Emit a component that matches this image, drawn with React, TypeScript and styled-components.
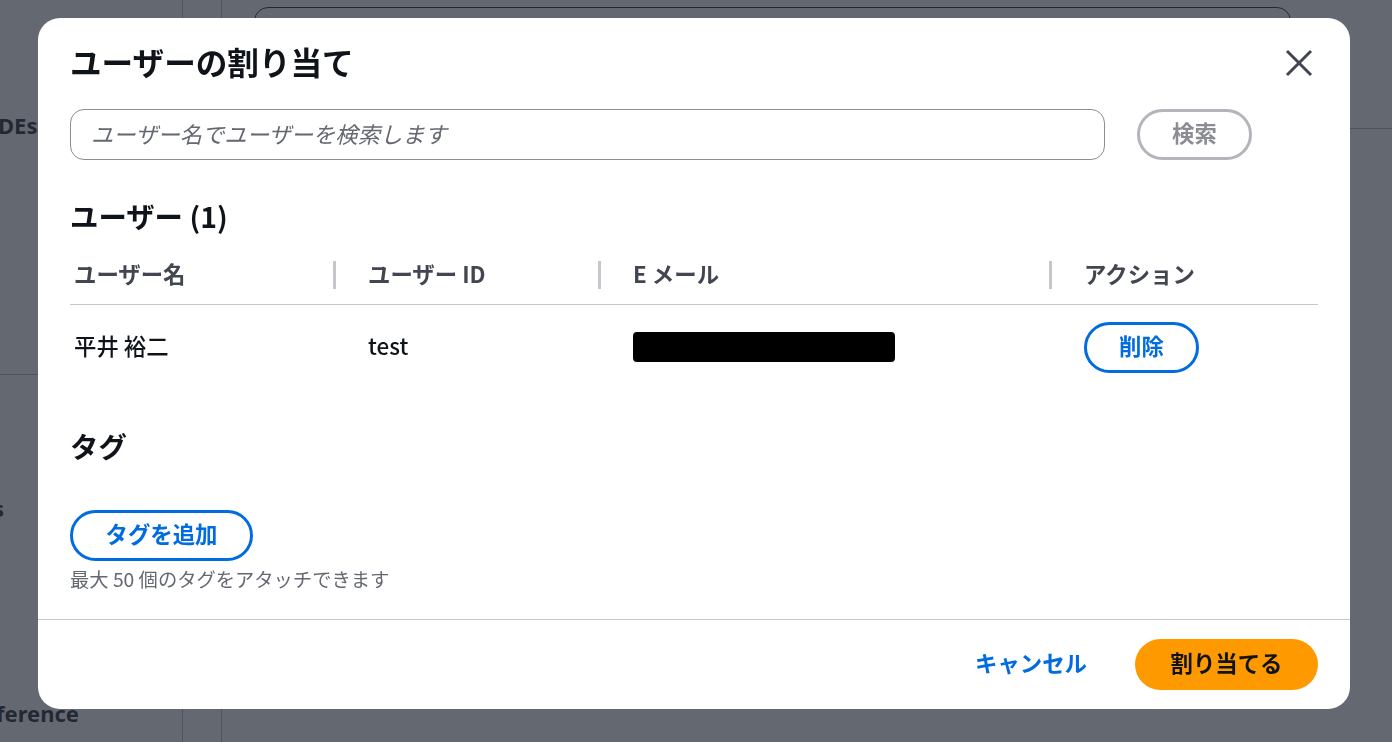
import { createGlobalStyle, styled } from 'styled-components';

const fontStack = `'Noto Sans CJK JP', 'Noto Sans', sans-serif`;

const GlobalStyle = createGlobalStyle`
  html, body {
    margin: 0;
    padding: 0;
    height: 100%;
    overflow: hidden;
    background: #fff;
    font-family: ${fontStack};
  }
`;

const Page = styled.div`
  display: flex;
  height: 742px;
  overflow: hidden;
  color: #16191f;
`;

const Sidebar = styled.aside`
  width: 182px;
  flex-shrink: 0;
  display: flex;
  flex-direction: column;
  border-right: 1px solid #aab7b8;
  overflow: hidden;
  font-family: 'Noto Sans', sans-serif;
  font-size: 22px;
  font-weight: 700;
  line-height: 30px;
`;

const SidebarItem = styled.div<{ $top: number; $left: number }>`
  margin-top: ${({ $top }) => $top}px;
  margin-left: ${({ $left }) => $left}px;
  white-space: nowrap;
`;

const SidebarRule = styled.hr`
  margin: 234px 0 0;
  border: none;
  border-top: 1px solid #aab7b8;
`;

const Gutter = styled.div`
  width: 38px;
  flex-shrink: 0;
  border-right: 1px solid #aab7b8;
`;

const Main = styled.main`
  flex: 1;
`;

const MainHeader = styled.div`
  height: 121px;
  padding: 7px 101px 0 32px;
  border-bottom: 1px solid #aab7b8;
`;

const SearchBox = styled.div`
  height: 60px;
  border: 1px solid #16191f;
  border-radius: 14px;
`;

const Overlay = styled.div`
  position: fixed;
  inset: 0;
  background: rgba(40, 46, 58, 0.72);
`;

const Modal = styled.section`
  position: absolute;
  left: 38px;
  top: 18px;
  width: 1312px;
  height: 691px;
  box-sizing: border-box;
  display: flex;
  flex-direction: column;
  background: #fff;
  border-radius: 22px;
  overflow: hidden;
`;

const ModalBody = styled.div`
  flex: 1;
  padding: 0 32px;
`;

const ModalHeader = styled.header`
  display: flex;
  align-items: center;
  justify-content: space-between;
  height: 91px;
  box-sizing: border-box;
  padding-bottom: 2px;
`;

const Title = styled.h2`
  margin: 0 0 3px;
  font-size: 31.6px;
  line-height: 44px;
  font-weight: 700;
  color: #0f141a;
`;

const CloseButton = styled.button`
  display: flex;
  margin-right: 5px;
  padding: 0;
  border: none;
  background: none;
  color: #424650;
`;

const SearchRow = styled.div`
  display: flex;
  gap: 32px;
  align-items: flex-start;
`;

const SearchInput = styled.input`
  width: 1035px;
  height: 51px;
  box-sizing: border-box;
  padding: 0 20px 4px;
  border: 1px solid #8c8c94;
  border-radius: 14px;
  font-family: ${fontStack};
  font-size: 22.3px;
  font-style: italic;
  color: #0f141a;
  outline: none;

  &::placeholder {
    color: #656871;
    opacity: 1;
  }
`;

const PillButton = styled.button<{ $width: number; $variant: 'normal' | 'disabled' | 'primary' }>`
  width: ${({ $width }) => $width}px;
  height: 51px;
  box-sizing: border-box;
  padding: 0 0 4px;
  border-radius: 26px;
  border: ${({ $variant }) =>
    $variant === 'primary'
      ? 'none'
      : $variant === 'disabled'
        ? '3px solid #b4b4bb'
        : '3px solid #006ce0'};
  background: ${({ $variant }) => ($variant === 'primary' ? '#ff9900' : '#fff')};
  color: ${({ $variant }) =>
    $variant === 'primary' ? '#0f141a' : $variant === 'disabled' ? '#8c8c94' : '#006ce0'};
  font-family: ${fontStack};
  font-size: 22.4px;
  font-weight: 700;
  line-height: 1;
`;

const SectionHeading = styled.h3<{ $top: number }>`
  margin: ${({ $top }) => $top}px 0 0;
  font-size: 28.4px;
  line-height: 36px;
  font-weight: 700;
  color: #0f141a;
`;

const UserTable = styled.div`
  display: grid;
  grid-template-columns: 263px 265px 451px 1fr;
  margin-top: 10px;
`;

const HeaderCell = styled.div<{ $divider?: boolean }>`
  position: relative;
  height: 61px;
  box-sizing: border-box;
  padding: 13px 0 0 ${({ $divider }) => ($divider ? 35 : 4)}px;
  border-bottom: 1px solid #c6c6cd;
  font-size: 22.4px;
  line-height: 32px;
  font-weight: 700;
  color: #424650;

  &::before {
    content: '';
    display: ${({ $divider }) => ($divider ? 'block' : 'none')};
    position: absolute;
    left: 0;
    top: 17px;
    width: 3px;
    height: 28px;
    background: #c6c6cd;
  }
`;

const BodyCell = styled.div<{ $divider?: boolean }>`
  display: flex;
  align-items: center;
  height: 84px;
  padding-left: ${({ $divider }) => ($divider ? 35 : 4)}px;
  font-size: 22.4px;
  font-weight: 500;
  line-height: 1;
  color: #0f141a;
`;

const CellText = styled.span`
  margin-top: -3px;
`;

const Redaction = styled.span`
  display: block;
  width: 262px;
  height: 30px;
  border-radius: 4px;
  background: #000;
`;

const AddTagRow = styled.div`
  margin-top: 46px;
`;

const Hint = styled.p`
  margin: 5px 0 0;
  font-size: 19.3px;
  line-height: 26px;
  color: #656871;
`;

const ModalFooter = styled.footer`
  display: flex;
  align-items: center;
  justify-content: flex-end;
  gap: 48px;
  height: 90px;
  box-sizing: border-box;
  padding: 0 32px;
  border-top: 1px solid #c6c6cd;
`;

const LinkButton = styled.button`
  padding: 0 0 5px;
  border: none;
  background: none;
  color: #006ce0;
  font-family: ${fontStack};
  font-size: 22.4px;
  font-weight: 700;
`;

const CloseIcon = () => (
  <svg width="28" height="28" viewBox="0 0 28 28" fill="none" aria-hidden="true">
    <path d="M2 2 L26 26 M26 2 L2 26" stroke="currentColor" strokeWidth="3" />
  </svg>
);

export default function App() {
  return (
    <>
      <GlobalStyle />
      <Page>
        <Sidebar>
          <SidebarItem $top={110} $left={-2}>DEs</SidebarItem>
          <SidebarRule />
          <SidebarItem $top={118} $left={-7}>s</SidebarItem>
          <SidebarItem $top={175} $left={-4}>ference</SidebarItem>
        </Sidebar>
        <Gutter />
        <Main>
          <MainHeader>
            <SearchBox />
          </MainHeader>
        </Main>
      </Page>
      <Overlay>
        <Modal>
          <ModalBody>
            <ModalHeader>
              <Title>ユーザーの割り当て</Title>
              <CloseButton aria-label="閉じる">
                <CloseIcon />
              </CloseButton>
            </ModalHeader>
            <SearchRow>
              <SearchInput placeholder="ユーザー名でユーザーを検索します" />
              <PillButton $width={115} $variant="disabled">検索</PillButton>
            </SearchRow>
            <SectionHeading $top={38}>ユーザー (1)</SectionHeading>
            <UserTable>
              <HeaderCell>ユーザー名</HeaderCell>
              <HeaderCell $divider>ユーザー ID</HeaderCell>
              <HeaderCell $divider>E メール</HeaderCell>
              <HeaderCell $divider>アクション</HeaderCell>
              <BodyCell><CellText>平井 裕二</CellText></BodyCell>
              <BodyCell $divider><CellText>test</CellText></BodyCell>
              <BodyCell $divider>
                <Redaction />
              </BodyCell>
              <BodyCell $divider>
                <PillButton $width={115} $variant="normal">削除</PillButton>
              </BodyCell>
            </UserTable>
            <SectionHeading $top={39}>タグ</SectionHeading>
            <AddTagRow>
              <PillButton $width={183} $variant="normal">タグを追加</PillButton>
            </AddTagRow>
            <Hint>最大 50 個のタグをアタッチできます</Hint>
          </ModalBody>
          <ModalFooter>
            <LinkButton>キャンセル</LinkButton>
            <PillButton $width={183} $variant="primary">割り当てる</PillButton>
          </ModalFooter>
        </Modal>
      </Overlay>
    </>
  );
}
